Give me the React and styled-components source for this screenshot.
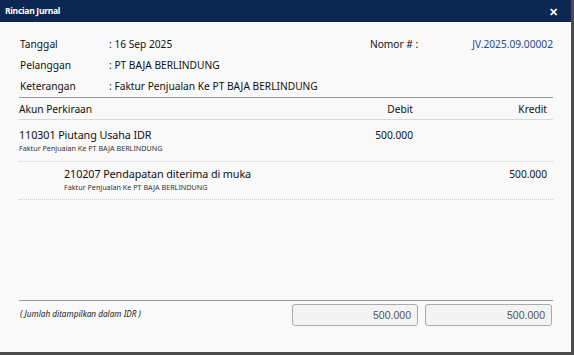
import React from "react";
import styled, { createGlobalStyle } from "styled-components";

const Global = createGlobalStyle`
  html, body { margin: 0; padding: 0; background: #4b4b4b; }
  body { width: 574px; height: 355px; overflow: hidden; font-family: "Noto Sans", "Open Sans", sans-serif; }
`;

const Dialog = styled.div`
  width: 571px;
  height: 352px;
  background: #f9f9f9;
  display: flex;
  flex-direction: column;
`;

const TitleBar = styled.div`
  height: 22px;
  background: #0b2752;
  color: #fff;
  display: flex;
  align-items: center;
  justify-content: space-between;
  padding: 0 13px 0 5px;
`;

const Title = styled.span`
  font-size: 8.6px;
  font-weight: 700;
  letter-spacing: -0.3px;
`;

const Close = styled.span`
  font-size: 11px;
  font-weight: 700;
  line-height: 1;
`;

const Body = styled.div`
  flex: 1;
  padding: 12px 18px 0 19px;
  display: flex;
  flex-direction: column;
`;

const InfoGrid = styled.div`
  display: grid;
  grid-template-columns: 89px 1fr auto auto;
  grid-template-rows: 20px 21px 22px;
  align-items: center;
  font-size: 10.2px;
  color: #111;
  padding-left: 1px;
  border-bottom: 1px solid #9a9a9a;
`;

const Label = styled.span``;
const Value = styled.span``;
const NoLabel = styled.span`
  padding-right: 54px;
`;
const NoValue = styled.span`
  color: #2b4a8c;
  text-align: right;
`;

const Table = styled.div`
  display: flex;
  flex-direction: column;
`;

const Cols = `
  display: grid;
  grid-template-columns: 1fr 133px 134px;
`;

const HeadRow = styled.div`
  ${Cols}
  height: 22px;
  box-sizing: border-box;
  align-items: center;
  font-size: 10.2px;
  color: #111;
  border-bottom: 1px solid #d8d8d8;
`;

const HeadCell = styled.div`
  text-align: ${(p) => (p.$right ? "right" : "left")};
  padding-right: ${(p) => (p.$right ? "6px" : "0")};
`;

const Row = styled.div`
  ${Cols}
  height: ${(p) => (p.$first ? "42px" : "38px")};
  padding-top: ${(p) => (p.$first ? "7px" : "4px")};
  border-bottom: 1px dotted #d0d0d0;
  align-items: start;
  box-sizing: border-box;
`;

const Account = styled.div`
  padding-left: ${(p) => (p.$indent ? "45px" : "0")};
  display: flex;
  flex-direction: column;
`;

const AccName = styled.span`
  font-size: 10.8px;
  color: #111;
  line-height: 16px;
  letter-spacing: -0.1px;
`;

const AccDesc = styled.span`
  font-size: 7.2px;
  color: #333;
  line-height: 10px;
`;

const Amount = styled.div`
  font-size: 10.2px;
  color: #111;
  text-align: right;
  padding-right: 6px;
  line-height: 16px;
`;

const Spacer = styled.div`
  flex: 1;
`;

const Footer = styled.div`
  ${Cols}
  border-top: 1px solid #9a9a9a;
  padding-top: 3px;
  margin-bottom: 26px;
`;

const Note = styled.span`
  font-size: 8.2px;
  font-style: italic;
  color: #222;
  padding-top: 4px;
  padding-left: 1px;
`;

const TotalBox = styled.div`
  margin-left: 6px;
  margin-right: 1px;
  height: 22px;
  box-sizing: border-box;
  border: 1px solid #ababab;
  border-radius: 3px;
  background: #f3f3f3;
  display: flex;
  align-items: center;
  justify-content: flex-end;
  padding-right: 6px;
  font-family: "Liberation Sans", Arial, sans-serif;
  font-size: 10.5px;
  color: #555;
`;

const rows = [
  { code: "110301 Piutang Usaha IDR", desc: "Faktur Penjualan Ke PT BAJA BERLINDUNG", debit: "500.000", kredit: "", indent: false },
  { code: "210207 Pendapatan diterima di muka", desc: "Faktur Penjualan Ke PT BAJA BERLINDUNG", debit: "", kredit: "500.000", indent: true },
];

export default function App() {
  return (
    <>
      <Global />
      <Dialog>
        <TitleBar>
          <Title>Rincian Jurnal</Title>
          <Close>✕</Close>
        </TitleBar>
        <Body>
          <InfoGrid>
            <Label>Tanggal</Label>
            <Value>: 16 Sep 2025</Value>
            <NoLabel>Nomor # :</NoLabel>
            <NoValue>JV.2025.09.00002</NoValue>
            <Label>Pelanggan</Label>
            <Value>: PT BAJA BERLINDUNG</Value>
            <span />
            <span />
            <Label>Keterangan</Label>
            <Value>: Faktur Penjualan Ke PT BAJA BERLINDUNG</Value>
            <span />
            <span />
          </InfoGrid>
          <Table>
            <HeadRow>
              <HeadCell>Akun Perkiraan</HeadCell>
              <HeadCell $right>Debit</HeadCell>
              <HeadCell $right>Kredit</HeadCell>
            </HeadRow>
            {rows.map((r, i) => (
              <Row key={r.code} $first={i === 0}>
                <Account $indent={r.indent}>
                  <AccName>{r.code}</AccName>
                  <AccDesc>{r.desc}</AccDesc>
                </Account>
                <Amount>{r.debit}</Amount>
                <Amount>{r.kredit}</Amount>
              </Row>
            ))}
          </Table>
          <Spacer />
          <Footer>
            <Note>( Jumlah ditampilkan dalam IDR )</Note>
            <TotalBox>500.000</TotalBox>
            <TotalBox>500.000</TotalBox>
          </Footer>
        </Body>
      </Dialog>
    </>
  );
}
